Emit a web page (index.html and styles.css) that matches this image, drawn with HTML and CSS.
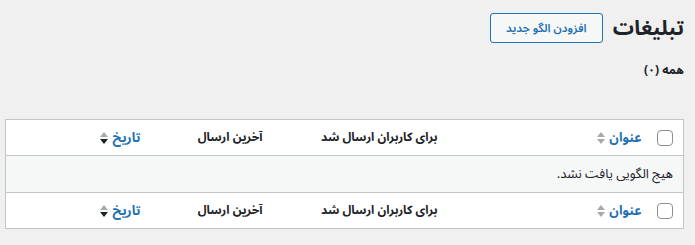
FILE: index.html
```html
<!DOCTYPE html>
<html lang="fa" dir="rtl">

<head>
    <meta charset="UTF-8">
    <meta name="viewport" content="width=device-width, initial-scale=1.0">
    <title>تبلیغات</title>
    <link rel="stylesheet" href="styles.css">
</head>

<body>
    <div class="wrap">
        <div class="page-head">
            <h1 class="page-title">تبلیغات</h1>
            <a class="add-new" href="#">افزودن الگو جدید</a>
        </div>

        <ul class="subsubsub">
            <li class="current">همه <span class="count">(۰)</span></li>
        </ul>

        <table class="list-table">
            <thead>
                <tr>
                    <td class="col-check"><span class="check-box"></span></td>
                    <th class="col-title"><a href="#" class="sortable">عنوان <span class="sort-ind"><i class="up"></i><i class="down"></i></span></a></th>
                    <th class="col-sent">برای کاربران ارسال شد</th>
                    <th class="col-last">آخرین ارسال</th>
                    <th class="col-date"><a href="#" class="sortable">تاریخ <span class="sort-ind desc"><i class="up"></i><i class="down"></i></span></a></th>
                </tr>
            </thead>
            <tbody>
                <tr class="no-items">
                    <td colspan="5">هیج الگویی یافت نشد.</td>
                </tr>
            </tbody>
            <tfoot>
                <tr>
                    <td class="col-check"><span class="check-box"></span></td>
                    <th class="col-title"><a href="#" class="sortable">عنوان <span class="sort-ind"><i class="up"></i><i class="down"></i></span></a></th>
                    <th class="col-sent">برای کاربران ارسال شد</th>
                    <th class="col-last">آخرین ارسال</th>
                    <th class="col-date"><a href="#" class="sortable">تاریخ <span class="sort-ind desc"><i class="up"></i><i class="down"></i></span></a></th>
                </tr>
            </tfoot>
        </table>
    </div>
</body>

</html>
```

FILE: styles.css
```css
body {
    margin: 0;
    background: #f0f0f1;
    color: #1d2327;
    font-family: "Noto Sans Arabic", "DejaVu Sans", sans-serif;
    font-size: 13px;
}

.wrap {
    padding: 13px 11px 0 5px;
}

.page-head {
    display: flex;
    align-items: center;
    gap: 10px;
    height: 30px;
}

.page-title {
    margin: 0;
    font-size: 21px;
    font-weight: 700;
    line-height: 30px;
    color: #1d2327;
}

.add-new {
    display: inline-flex;
    align-items: center;
    justify-content: center;
    box-sizing: border-box;
    width: 113px;
    height: 30px;
    border: 1px solid #2271b1;
    border-radius: 3px;
    background: #f6f7f7;
    color: #2271b1;
    font-size: 11.5px;
    font-weight: 600;
    text-decoration: none;
}

.subsubsub {
    list-style: none;
    margin: 18px 0 0;
    padding: 0;
    height: 20px;
    font-size: 12px;
    font-weight: 700;
    line-height: 20px;
}

.list-table {
    margin-top: 38px;
    width: 679px;
    border: 1px solid #c3c4c7;
    border-collapse: collapse;
    table-layout: fixed;
    background: #fff;
}

.list-table th,
.list-table td {
    height: 36px;
    padding: 0 8px;
    box-sizing: border-box;
    text-align: right;
    vertical-align: middle;
    font-size: 12px;
    font-weight: 700;
}

.list-table thead tr {
    border-bottom: 1px solid #c3c4c7;
}

.list-table tfoot tr {
    border-top: 1px solid #c3c4c7;
}

.col-check {
    width: 34px;
}

.col-title {
    width: 204px;
}

.col-sent {
    width: 175px;
}

.col-last {
    width: 122px;
}

.list-table td.col-check {
    padding: 0 10px 0 0;
}

.check-box {
    display: block;
    width: 16px;
    height: 16px;
    box-sizing: border-box;
    border: 1px solid #8c8f94;
    border-radius: 4px;
    background: #fff;
}

.sortable {
    display: inline-flex;
    align-items: center;
    gap: 4px;
    color: #2271b1;
    text-decoration: none;
    font-size: 13px;
}

.sort-ind {
    display: inline-flex;
    flex-direction: column;
    gap: 2px;
}

.sort-ind i {
    display: block;
    width: 0;
    height: 0;
    border-left: 4px solid transparent;
    border-right: 4px solid transparent;
}

.sort-ind .up {
    border-bottom: 5px solid #a7aaad;
}

.sort-ind .down {
    border-top: 5px solid #a7aaad;
}

.sort-ind.desc .down {
    border-top-color: #1d2327;
}

.no-items td {
    background: #f6f7f7;
    font-weight: 400;
    font-size: 13px;
    padding-right: 10px;
    height: 37px;
}
```
